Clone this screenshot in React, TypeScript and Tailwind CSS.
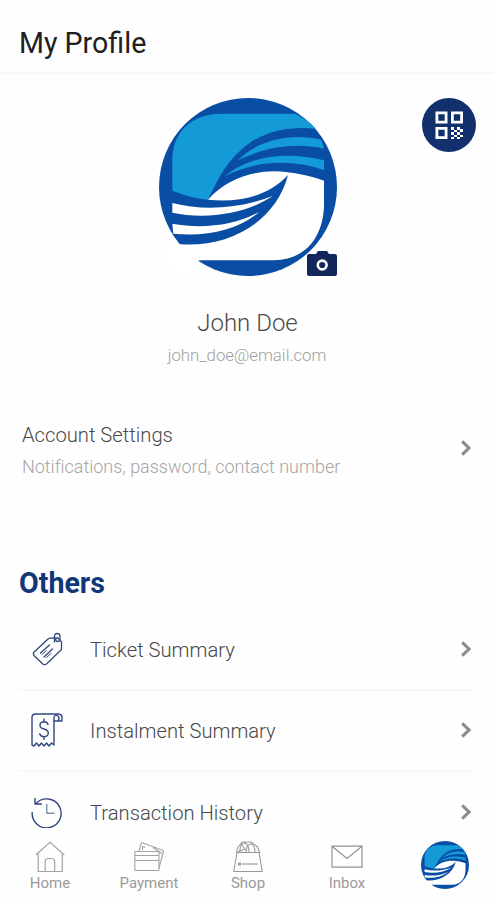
import React from "react";

function Logo({ className }: { className: string }) {
  return (
    <svg viewBox="25 23 534 534" className={className}>
      <circle cx="292" cy="290" r="267" fill="#0a4da5" />
      <g fill="#159ad8">
        <path d="M65 301V205C68 125 120 72 210 70H432C460 82 480 98 496 115C415 107 335 122 275 175C230 214 205 258 172 328C132 324 98 314 65 301Z" />
        <path d="M262 210C315 155 410 125 512 148L520 175C425 155 340 172 262 210Z" />
        <path d="M222 258C290 200 400 180 520 210V239C420 206 315 210 222 258Z" />
      </g>
      <g fill="#fff">
        <path d="M172 328C225 268 300 243 370 243C425 245 475 255 520 271V345C518 435 470 508 370 510H145L100 560L20 500L50 462H90C235 472 375 395 412 254C350 320 265 337 172 328Z" />
        <path d="M65 338C165 364 275 352 366 317C285 372 165 388 65 367Z" />
        <path d="M65 400C155 417 255 405 326 364C265 420 165 440 68 430Z" />
      </g>
    </svg>
  );
}

function CameraIcon() {
  return (
    <svg viewBox="0 0 30 26" className="absolute right-0 bottom-0 w-[30px] h-[26px]">
      <path d="M2 4H9L11 1H20L22 4H28Q30 4 30 6V24Q30 26 28 26H2Q0 26 0 24V6Q0 4 2 4Z" fill="#12285d" />
      <circle cx="15.2" cy="15" r="4.4" fill="none" stroke="#fff" strokeWidth="2.6" />
    </svg>
  );
}

function QrIcon() {
  return (
    <svg viewBox="0 0 28 28" className="w-7 h-7">
      <path
        d="M1.9 1.9h9.2v9.2h-9.2zM17.4 1.9h9.2v9.2h-9.2zM1.9 17.4h9.2v9.2h-9.2z"
        fill="none"
        stroke="#fff"
        strokeWidth="2.8"
      />
      <path
        d="M16 16h3v3h-3zM22 16h3v3h-3zM19 19h3v2h-3zM25 18h3v3h-3zM16 21h3v3h-3zM22 21h3v3h-3zM19 24h3v2h-3zM25 24h3v2h-3zM16 26h3v2h-3zM22 26h3v2h-3z"
        fill="#fff"
      />
    </svg>
  );
}

function Chevron() {
  return (
    <svg viewBox="0 0 10 16" className="w-[10px] h-4 shrink-0" fill="none" stroke="#8b8b8b" strokeWidth="3">
      <path d="M1.2 1.4L8 8L1.2 14.6" />
    </svg>
  );
}

function TicketIcon() {
  return (
    <svg viewBox="0 0 32 34" className="w-8 h-[34px]" fill="none" stroke="#32477f" strokeWidth="1.3" strokeLinejoin="round" strokeLinecap="round">
      <path d="M18.5 6.2L27 5.8L30.5 10V17.5L15.5 32Q13.5 33.4 11.8 32L3.2 23.8Q1.6 21.6 3.2 20L17 7Z" />
      <path d="M23.5 10V4.5Q23.5 1.5 26.2 1.5Q29 1.5 29 4.5V7Q29 9.5 26.5 9.5Q24.8 9.5 24.8 7.5" />
      <path d="M9.5 21L18.5 13M13 25L21.5 17" />
      <path d="M11 22.5L15 19M15.5 25.5L20 21.5" strokeWidth="1" />
    </svg>
  );
}

function InstalmentIcon() {
  return (
    <svg viewBox="0 0 32 34" className="w-8 h-[34px]" fill="none" stroke="#32477f" strokeWidth="1.4" strokeLinejoin="round" strokeLinecap="round">
      <path d="M1 32V4.5Q1 1 4.5 1H27.5Q31 1.5 31 4.5V8H23V32L20.5 30L18 33L15.5 30L13 33L10.5 30L8 33L5.5 30L3 33Z" />
      <path d="M23 8V4.5Q23.5 1.5 26.2 2.5Q29 4 27.5 7.5" />
      <path d="M17 11.5Q16 8.8 13 8.8Q9 9 9 12.2Q9 15 13 16Q17.3 17 17.3 20.3Q17 23.6 13 23.8Q9.5 23.7 8.7 20.8M13 6V8.8M13 23.8V26.5" />
    </svg>
  );
}

function HistoryIcon() {
  return (
    <svg viewBox="0 0 32 32" className="w-8 h-8" fill="none" stroke="#32477f" strokeWidth="1.4" strokeLinejoin="round">
      <path d="M5 7.5A14.5 14.5 0 1 1 1.2 16M4 2V8H11" />
      <path d="M15.8 8V17.3H23.5" stroke="#8290b2" />
    </svg>
  );
}

function HomeIcon() {
  return (
    <svg viewBox="0 0 30 32" className="w-[30px] h-8" fill="none" stroke="#a3a3a3" strokeWidth="1.2">
      <path d="M.7 14L15 1.2L29.3 14M3.2 12V30.5H27.3V12M10.2 30.5V20.5Q10.2 17.5 13 17.5H17Q19.7 17.5 19.7 20.5V30.5" />
    </svg>
  );
}

function PaymentIcon() {
  return (
    <svg viewBox="0 0 30 32" className="w-[30px] h-8" fill="none" stroke="#a3a3a3" strokeWidth="1.1" strokeLinejoin="round">
      <path d="M.8 10.5H25V28.2Q25 29.5 23.7 29.5H2Q.8 29.5 .8 28.2ZM.8 14.5H25M.8 19.5H25" />
      <path d="M5 10.5L7 3Q7.5 1.5 9 2L28.5 9.3Q29.8 10 29.2 11.5L25 27M19 6.5L27.8 12.5M8.5 9V6Q10 4.5 10.5 7" />
    </svg>
  );
}

function ShopIcon() {
  return (
    <svg viewBox="0 0 30 32" className="w-[30px] h-8" fill="none" stroke="#999" strokeWidth="1.1" strokeLinejoin="round">
      <path d="M4 11.5H26L29.3 30.5H.7Z" />
      <path d="M3.5 12L4.5 7L9 1H18L24.5 6L27 12M7 12V8Q8 2 12 2Q16 3 16 12M13 12Q13 3 18 3Q22 4 22 12M8 3L12 8L5 11" />
      <path d="M5 23H8" strokeWidth="2.8" />
      <path d="M9 23H25" strokeWidth="1.6" strokeDasharray="2 .6" />
    </svg>
  );
}

function InboxIcon() {
  return (
    <svg viewBox="0 0 32 32" className="w-8 h-8" fill="none" stroke="#929292" strokeWidth="1.2">
      <path d="M1 5.2H31V26.2H1ZM1 5.2L16 17.5L31 5.2" />
    </svg>
  );
}

const menu = [
  { label: "Ticket Summary", icon: <TicketIcon /> },
  { label: "Instalment Summary", icon: <InstalmentIcon /> },
  { label: "Transaction History", icon: <HistoryIcon /> },
];

const tabs = [
  { label: "Home", icon: <HomeIcon /> },
  { label: "Payment", icon: <PaymentIcon /> },
  { label: "Shop", icon: <ShopIcon /> },
  { label: "Inbox", icon: <InboxIcon /> },
];

export default function App() {
  return (
    <div className="w-[494px] h-[900px] overflow-hidden bg-[#fefefe] flex flex-col font-[Roboto,sans-serif]">
      <header className="h-[74px] shrink-0 border-b-2 border-[#f7f7f7] px-[19px] pt-[23px]">
        <h1 className="text-[28.6px] leading-10 text-[#202020]">My Profile</h1>
      </header>

      <main className="h-[761px] shrink-0 overflow-hidden">
        <section className="relative h-[302px] flex flex-col items-center pt-6">
          <div className="relative left-[0.5px] w-[178px] h-[178px]">
            <Logo className="w-full h-full" />
            <CameraIcon />
          </div>
          <button className="absolute top-6 right-[18px] w-[54px] h-[54px] rounded-full bg-[#11306d] flex items-center justify-center">
            <QrIcon />
          </button>
          <h2 className="mt-[31px] pl-px text-2xl leading-8 font-light text-[#4a4a4a]">John Doe</h2>
          <p className="mt-1 text-[16.8px] leading-6 font-light text-[#a0a0a0]">john_doe@email.com</p>
        </section>

        <button className="w-full h-[146px] flex items-start justify-between pl-[22px] pr-[23px] pt-[43px] text-left">
          <span>
            <span className="block text-[20.2px] leading-8 font-light text-[#484848]">Account Settings</span>
            <span className="block text-lg leading-8 font-light text-[#a5a5a5] tracking-[-0.02px]">
              Notifications, password, contact number
            </span>
          </span>
          <span className="pt-[21px]">
            <Chevron />
          </span>
        </button>

        <section className="pl-[19px] pr-[18px] pt-[41px]">
          <h2 className="h-[46px] text-[28.6px] leading-10 font-bold text-[#123779]">Others</h2>
          {menu.map((item) => (
            <button
              key={item.label}
              className="w-full h-[81.5px] flex items-center border-b-2 border-[#f8f8f8] pl-3 pr-[5px] text-left"
            >
              <span className="w-[59px]">{item.icon}</span>
              <span className="flex-1 pt-0.5 text-[20.2px] font-light text-[#484848]">{item.label}</span>
              <Chevron />
            </button>
          ))}
        </section>
      </main>

      <nav className="flex-1 flex items-start bg-[#fefefe] pt-[5.5px]">
        {tabs.map((tab) => (
          <button key={tab.label} className="w-[99px] pl-px shrink-0 flex flex-col items-center">
            {tab.icon}
            <span className="text-[15px] leading-5 text-[#9a9a9a]">{tab.label}</span>
          </button>
        ))}
        <button className="flex-1 flex justify-center">
          <Logo className="w-12 h-12" />
        </button>
      </nav>
    </div>
  );
}
